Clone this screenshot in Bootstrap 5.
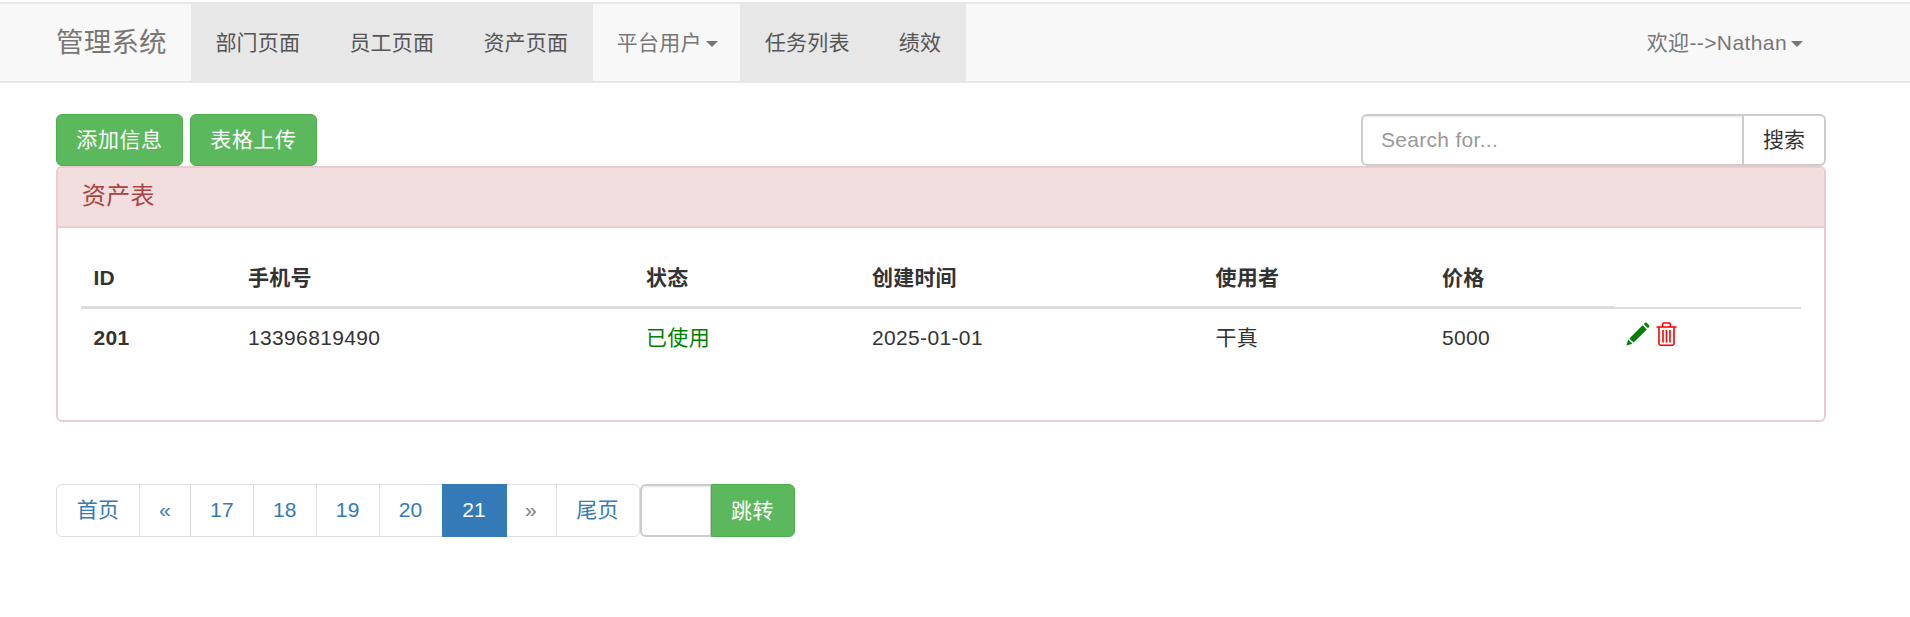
<!DOCTYPE html>
<html lang="zh-CN">
<head>
    <meta charset="UTF-8">
    <title>管理系统</title>
    <link href="https://cdn.jsdelivr.net/npm/bootstrap@5.3.3/dist/css/bootstrap.min.css" rel="stylesheet">
    <style>
        body { font-family: "Liberation Sans", "Noto Sans CJK SC", sans-serif; font-size: 21px; line-height: 30px; letter-spacing: .2px; color: #333; background: #fff; }

        /* 顶部导航 */
        .top-bar { background: #f8f8f8; border-top: 2px solid #e7e7e7; border-bottom: 2px solid #e7e7e7; margin-top: 2px; height: 81px; align-items: stretch; padding: 0; }
        .top-bar .navbar-brand { color: #777; font-size: 27.5px; line-height: 77px; padding: 0 24px 0 56px; margin: 0; }
        .top-bar .navbar-nav { align-items: stretch; }
        .top-bar.navbar-expand .navbar-nav .nav-link { color: #777; line-height: 77px; padding: 0 24.6px; height: 77px; }
        .top-bar.navbar-expand .main-links .nav-link { background: #e7e7e7; color: #555; }
        .top-bar.navbar-expand .main-links .nav-link.plat-user { background: #f8f8f8; color: #777; padding-left: 24px; padding-right: 22.6px; }
        .top-bar .dropdown-toggle::after { border-top: 6px solid; border-right: 6px solid transparent; border-left: 6px solid transparent; border-bottom: 0; margin-left: 4px; vertical-align: 3px; }
        .top-bar.navbar-expand .user-links { padding-right: 107px; }
        .top-bar.navbar-expand .user-links .nav-link { padding: 0; letter-spacing: .4px; }

        /* 主体 */
        .page-body { margin-left: 56px; width: 1770px; padding-top: 31px; }
        .tool-row { height: 52px; }
        .tool-btns { gap: 7px; }
        .btn-add { background: #5cb85c; border: 1.5px solid #4cae4c; color: #fff; font-size: 21px; line-height: 30px; letter-spacing: .6px; padding: 9px 0; border-radius: 6px; height: 52px; width: 127px; }
        .btn-add:hover { background: #449d44; color: #fff; border-color: #398439; }
        .search-box { width: 465px; height: 52px; }
        .search-box .form-control { font-size: 21px; line-height: 30px; padding: 9px 18px; border: 2px solid #ccc; border-radius: 6px 0 0 6px; color: #555; box-shadow: inset 0 1.5px 1.5px rgba(0,0,0,.075); }
        .search-box .form-control::placeholder { color: #999; letter-spacing: .3px; }
        .search-box .btn { font-size: 21px; line-height: 30px; padding: 9px 0; width: 83px; border: 2px solid #ccc; border-left-width: 1px; color: #333; border-radius: 0 6px 6px 0; background: #fff; }

        .asset-panel { --bs-card-border-color: #ebccd1; --bs-card-border-width: 2px; --bs-card-border-radius: 6px; --bs-card-inner-border-radius: 4px; height: 256px; }
        .asset-panel .card-header { background: #f2dede; color: #a94442; border-bottom: 2px solid #ebccd1; height: 60px; font-size: 24px; line-height: 26px; padding: 15px 24px; }
        .asset-panel .card-body { padding: 21px 23px 0 23px; }

        .asset-table { table-layout: fixed; width: 1720px; margin: 0; --bs-table-color: #333; --bs-table-bg: transparent; }
        .asset-table th, .asset-table td { padding: 13.5px; line-height: 30px; font-size: 21px; border: 0; }
        .asset-table tr > :first-child { padding-left: 12.5px; }
        .asset-table thead th { border-bottom: 3px solid #ddd; font-weight: 700; }
        .asset-table tbody td, .asset-table tbody th { border-top: 2px solid #ddd; font-weight: 400; letter-spacing: .35px; }
        .asset-table tbody tr > :first-child { font-weight: 700; }
        .asset-table thead, .asset-table tbody { border: 0; }
        .w-a { width: 153.5px; } .w-b { width: 398px; } .w-c { width: 226px; } .w-d { width: 343.5px; }
        .w-e { width: 226.5px; } .w-f { width: 185.5px; } .w-g { width: 187px; }
        .used-text { color: #008000; }
        .row-icons { gap: 6px; margin-left: -2px; }
        .row-icons svg { display: block; }

        /* 分页 */
        .pager-row { margin-top: 62px; height: 53px; }
        .pager-row .pagination { margin: 0; --bs-pagination-font-size: 21px; --bs-pagination-color: #337ab7; --bs-pagination-border-color: #ddd; --bs-pagination-active-bg: #337ab7; --bs-pagination-active-border-color: #337ab7; --bs-pagination-active-color: #fff; --bs-pagination-border-width: 1.5px; --bs-pagination-border-radius: 6px; --bs-pagination-padding-x: 0; --bs-pagination-padding-y: 10px; }
        .pager-row .page-link { line-height: 30px; height: 53px; text-align: center; }
        .pg-w-word .page-link { width: 84px; }
        .pg-w-arrow .page-link { width: 52px; }
        .pg-w-num .page-link { width: 63.9px; }
        .pg-w-cur .page-link { width: 65px; }
        .pg-w-next .page-link { width: 51px; color: #777; }
        .jump-box { width: 155px; height: 53px; }
        .jump-box .form-control { border: 2px solid #ccc; border-radius: 6px 0 0 6px; box-shadow: inset 0 1.5px 1.5px rgba(0,0,0,.075); font-size: 21px; }
        .jump-box .btn { width: 84px; background: #5cb85c; border: 1.5px solid #4cae4c; color: #fff; font-size: 21px; line-height: 30px; letter-spacing: .6px; padding: 10px 0; border-radius: 0 6px 6px 0; }
    </style>
</head>
<body>

<!-- 导航 -->
<nav class="navbar navbar-expand top-bar">
    <a class="navbar-brand" href="#">管理系统</a>
    <ul class="navbar-nav main-links">
        <li class="nav-item"><a class="nav-link" href="#">部门页面</a></li>
        <li class="nav-item"><a class="nav-link" href="#">员工页面</a></li>
        <li class="nav-item"><a class="nav-link" href="#">资产页面</a></li>
        <li class="nav-item dropdown"><a class="nav-link plat-user dropdown-toggle" href="#">平台用户</a></li>
        <li class="nav-item"><a class="nav-link" href="#">任务列表</a></li>
        <li class="nav-item"><a class="nav-link" href="#">绩效</a></li>
    </ul>
    <ul class="navbar-nav ms-auto user-links">
        <li class="nav-item dropdown"><a class="nav-link dropdown-toggle" href="#">欢迎--&gt;Nathan</a></li>
    </ul>
</nav>

<div class="page-body">
    <div class="d-flex justify-content-between tool-row">
        <div class="d-flex tool-btns">
            <button class="btn btn-add" type="button">添加信息</button>
            <button class="btn btn-add" type="button">表格上传</button>
        </div>
        <div class="input-group search-box">
            <input type="text" class="form-control" placeholder="Search for...">
            <button class="btn" type="button">搜索</button>
        </div>
    </div>

    <div class="card asset-panel">
        <div class="card-header">资产表</div>
        <div class="card-body">
            <table class="table asset-table">
                <colgroup>
                    <col class="w-a"><col class="w-b"><col class="w-c"><col class="w-d"><col class="w-e"><col class="w-f"><col class="w-g">
                </colgroup>
                <thead>
                <tr>
                    <th>ID</th>
                    <th>手机号</th>
                    <th>状态</th>
                    <th>创建时间</th>
                    <th>使用者</th>
                    <th>价格</th>
                </tr>
                </thead>
                <tbody>
                <tr>
                    <th scope="row">201</th>
                    <td>13396819490</td>
                    <td class="used-text">已使用</td>
                    <td>2025-01-01</td>
                    <td>干真</td>
                    <td>5000</td>
                    <td>
                        <div class="d-flex row-icons">
                            <svg width="24" height="24" viewBox="0 0 24 24" aria-label="编辑">
                                <path fill="#008000" d="M0.5 23.5 L2.2 17.6 L6.4 21.8 Z M3.4 16.4 L16.6 3.2 L20.8 7.4 L7.6 20.6 Z M17.8 2 L19.4 0.6 Q20 0.2 20.6 0.7 L23.3 3.4 Q23.8 4 23.3 4.6 L22 6.2 Z"/>
                            </svg>
                            <svg width="21" height="24" viewBox="0 0 21 24" aria-label="删除">
                                <path fill="none" stroke="#f00" stroke-width="1.6" d="M0.5 5 H20.5 M6.6 5 V2.2 Q6.6 1 7.8 1 H13.2 Q14.4 1 14.4 2.2 V5 M3 5.5 V21.6 Q3 23.2 4.6 23.2 H16.4 Q18 23.2 18 21.6 V5.5 M7 8 V20.5 M10.5 8 V20.5 M14 8 V20.5"/>
                            </svg>
                        </div>
                    </td>
                </tr>
                </tbody>
            </table>
        </div>
    </div>

    <div class="d-flex pager-row">
        <ul class="pagination">
            <li class="page-item pg-w-word"><a class="page-link" href="#">首页</a></li>
            <li class="page-item pg-w-arrow"><a class="page-link" href="#">«</a></li>
            <li class="page-item pg-w-num"><a class="page-link" href="#">17</a></li>
            <li class="page-item pg-w-num"><a class="page-link" href="#">18</a></li>
            <li class="page-item pg-w-num"><a class="page-link" href="#">19</a></li>
            <li class="page-item pg-w-num"><a class="page-link" href="#">20</a></li>
            <li class="page-item pg-w-cur active"><a class="page-link" href="#">21</a></li>
            <li class="page-item pg-w-next"><a class="page-link" href="#">»</a></li>
            <li class="page-item pg-w-word"><a class="page-link" href="#">尾页</a></li>
        </ul>
        <div class="input-group jump-box">
            <input type="text" class="form-control">
            <button class="btn" type="button">跳转</button>
        </div>
    </div>
</div>

<script src="https://cdn.jsdelivr.net/npm/bootstrap@5.3.3/dist/js/bootstrap.bundle.min.js"></script>
</body>
</html>
